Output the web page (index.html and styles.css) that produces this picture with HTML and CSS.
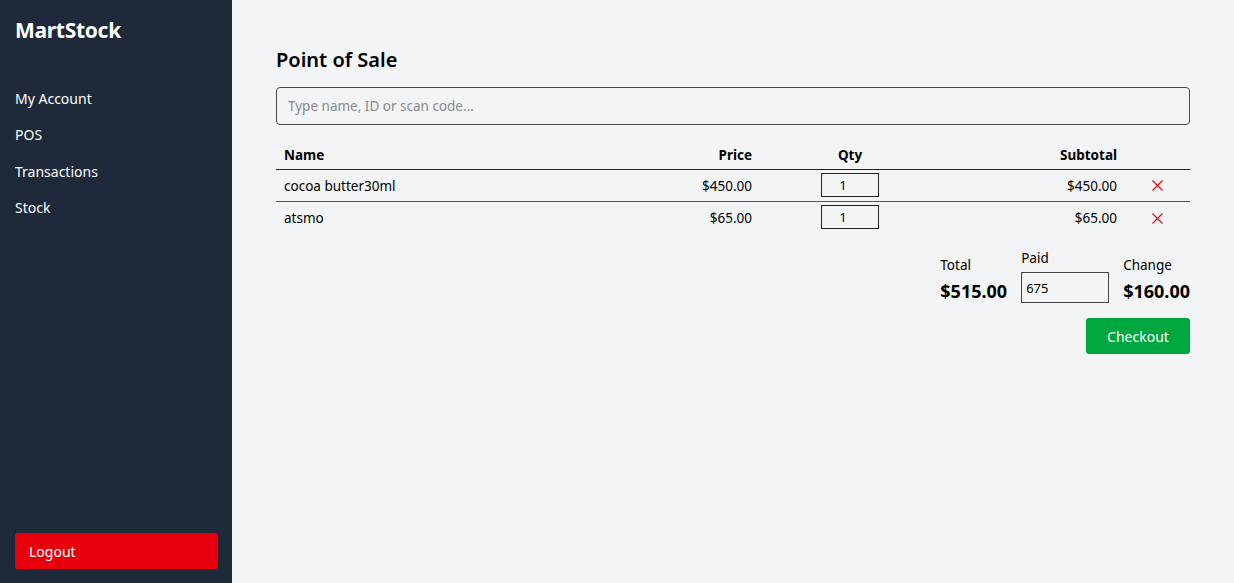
FILE: index.html
```html
<!DOCTYPE html>
<html lang="en">
<head>
<meta charset="utf-8">
<title>MartStock POS</title>
<link rel="stylesheet" href="styles.css">
</head>
<body>
<div class="app">
  <aside class="sidebar">
    <div class="brand">MartStock</div>
    <nav class="nav">
      <a class="nav-item">My Account</a>
      <a class="nav-item">POS</a>
      <a class="nav-item">Transactions</a>
      <a class="nav-item">Stock</a>
    </nav>
    <button class="logout">Logout</button>
  </aside>
  <main class="main">
    <h1 class="title">Point of Sale</h1>
    <input class="search" type="text" placeholder="Type name, ID or scan code...">
    <table class="cart">
      <colgroup>
        <col class="c-name"><col class="c-price"><col class="c-qty"><col class="c-sub"><col class="c-del">
      </colgroup>
      <thead>
        <tr><th class="l">Name</th><th class="r">Price</th><th class="c">Qty</th><th class="r">Subtotal</th><th></th></tr>
      </thead>
      <tbody>
        <tr class="row-border">
          <td class="l">cocoa butter30ml</td><td class="r">$450.00</td>
          <td class="c"><input class="qty" type="text" value="1"></td>
          <td class="r">$450.00</td>
          <td class="c"><svg class="del" width="11" height="11" viewBox="0 0 11 11"><path d="M0.5 0.5L10.5 10.5M10.5 0.5L0.5 10.5" stroke="#e7000b" stroke-width="1.1" fill="none"/></svg></td>
        </tr>
        <tr>
          <td class="l">atsmo</td><td class="r">$65.00</td>
          <td class="c"><input class="qty" type="text" value="1"></td>
          <td class="r">$65.00</td>
          <td class="c"><svg class="del" width="11" height="11" viewBox="0 0 11 11"><path d="M0.5 0.5L10.5 10.5M10.5 0.5L0.5 10.5" stroke="#e7000b" stroke-width="1.1" fill="none"/></svg></td>
        </tr>
      </tbody>
    </table>
    <div class="totals">
      <div class="tblock">
        <div class="tlabel">Total</div>
        <div class="tvalue">$515.00</div>
      </div>
      <div class="tblock paid">
        <div class="tlabel">Paid</div>
        <input class="paid-input" type="text" value="675">
      </div>
      <div class="tblock">
        <div class="tlabel">Change</div>
        <div class="tvalue">$160.00</div>
      </div>
    </div>
    <div class="actions">
      <button class="checkout">Checkout</button>
    </div>
  </main>
</div>
</body>
</html>
```

FILE: styles.css
```css
* { box-sizing: border-box; }
html, body { margin: 0; padding: 0; height: 100%; }
body {
  font-family: "Noto Sans", "Open Sans", sans-serif;
  color: #000;
  background: #f3f4f6;
}
.app {
  display: flex;
  height: 583px;
}
.sidebar {
  width: 232px;
  flex-shrink: 0;
  background: #1e2939;
  color: #fff;
  display: flex;
  flex-direction: column;
  padding: 15px 15px 14px 15px;
}
.brand {
  font-size: 21px;
  font-weight: 700;
  letter-spacing: -0.3px;
  line-height: 30px;
}
.nav {
  display: flex;
  flex-direction: column;
  margin-top: 44px;
}
.nav-item {
  font-size: 14px;
  line-height: 20px;
  height: 36.3px;
  color: #fff;
  cursor: pointer;
}
.logout {
  margin-top: auto;
  width: 203px;
  height: 36px;
  border: none;
  border-radius: 3px;
  background: #e7000b;
  color: #fff;
  font-family: inherit;
  font-size: 14px;
  text-align: left;
  padding: 0 14px;
}
.main {
  flex: 1;
  padding: 46px 44px 0 44px;
}
.title {
  margin: 0;
  font-size: 20px;
  font-weight: 600;
  line-height: 28px;
}
.search {
  display: block;
  width: 100%;
  height: 38px;
  margin-top: 13px;
  border: 1px solid #4b4b4b;
  border-radius: 4px;
  background: #f3f4f6;
  padding: 0 11px;
  font-family: inherit;
  font-size: 13.5px;
  color: #000;
}
.search::placeholder { color: #8a8a8a; }
.cart {
  width: 100%;
  margin-top: 16px;
  border-collapse: collapse;
  table-layout: fixed;
  font-size: 13.5px;
}
.c-name { width: 364px; }
.c-price { width: 120px; }
.c-qty { width: 180px; }
.c-sub { width: 185px; }
.c-del { width: 65px; }
.cart th {
  font-weight: 700;
  height: 28px;
  padding: 0 8px;
  border-bottom: 1px solid #222;
}
.cart td {
  height: 32px;
  padding: 2px 8px 0 8px;
}
.row-border td { border-bottom: 1px solid #555; }
.l { text-align: left; }
.r { text-align: right; }
.c { text-align: center; }
.qty {
  width: 58px;
  height: 24px;
  border: 1px solid #222;
  background: #f3f4f6;
  text-align: center;
  font-family: inherit;
  font-size: 13px;
  padding: 0 14px 0 0;
  vertical-align: middle;
  margin-top: -2px;
}
.del {
  display: inline-block;
  vertical-align: middle;
  margin-top: -3px;
}
.totals {
  display: flex;
  justify-content: flex-end;
  align-items: flex-end;
  gap: 14px;
  margin-top: 15px;
}
.tblock {
  display: flex;
  flex-direction: column;
}
.tlabel {
  font-size: 13.5px;
  line-height: 20px;
}
.tvalue {
  font-size: 18px;
  font-weight: 700;
  line-height: 24px;
  margin-top: 4px;
}
.paid .tlabel { margin-bottom: 4px; }
.paid-input {
  width: 88px;
  height: 31px;
  border: 1px solid #444;
  background: #f3f4f6;
  font-family: inherit;
  font-size: 13px;
  padding: 0 4px;
}
.actions {
  display: flex;
  justify-content: flex-end;
  margin-top: 15px;
}
.checkout {
  width: 104px;
  height: 36px;
  border: none;
  border-radius: 3px;
  background: #00a63e;
  color: #fff;
  font-family: inherit;
  font-size: 14px;
}
```
